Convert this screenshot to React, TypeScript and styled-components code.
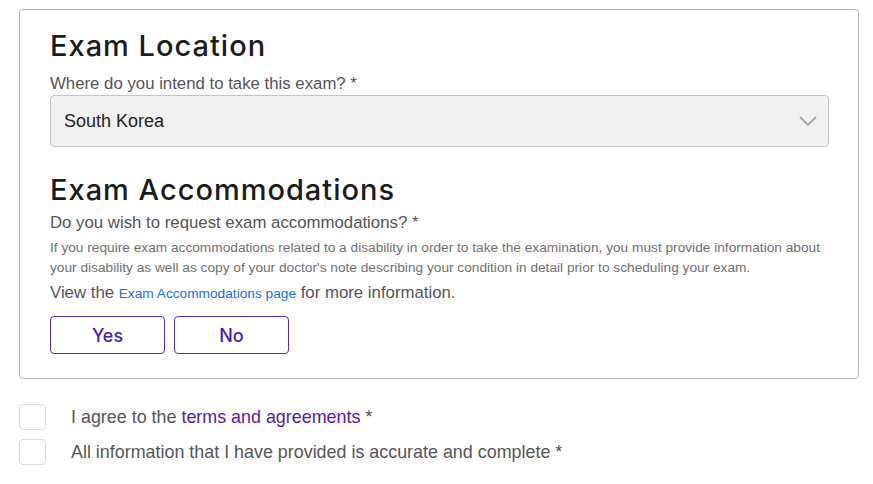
import React from "react";
import styled, { createGlobalStyle } from "styled-components";

const GlobalStyle = createGlobalStyle`
  html, body { margin: 0; padding: 0; background: #ffffff; }
  body { font-family: "Liberation Sans", Arial, sans-serif; }
`;

const Page = styled.div`
  padding: 9px 14px 0 19px;
`;

const Card = styled.section`
  border: 1px solid #b3b3b3;
  border-radius: 4px;
  padding: 19px 29px 24px 30px;
  display: flex;
  flex-direction: column;
`;

const Heading = styled.h2<{ $top?: number }>`
  margin: ${(p) => p.$top ?? 0}px 0 0 0;
  font-family: Inter, "Open Sans", sans-serif;
  font-weight: 500;
  font-size: 29px;
  line-height: 34px;
  letter-spacing: 1px;
  color: #1c1c1c;
`;

const Label = styled.div<{ $top: number }>`
  margin-top: ${(p) => p.$top}px;
  font-size: 16.8px;
  line-height: 20px;
  color: #555555;
`;

const Hint = styled.p`
  margin: 5px 0 0 0;
  font-size: 13.7px;
  line-height: 20px;
  color: #707070;
`;

const Link = styled.a`
  color: #1a6ee8;
  font-size: 13.7px;
  text-decoration: none;
`;

const SelectBox = styled.div`
  margin-top: 1px;
  height: 50px;
  border: 1px solid #c4c4c4;
  border-radius: 4px;
  background: #f1f1f1;
  display: flex;
  align-items: center;
  justify-content: space-between;
  padding: 0 11px 0 13px;
  font-size: 18px;
  color: #222222;
`;

const ButtonRow = styled.div`
  margin-top: 12px;
  display: flex;
  gap: 9px;
`;

const ChoiceButton = styled.button`
  width: 115px;
  height: 38px;
  border: 1px solid #5a2dbb;
  border-radius: 4px;
  background: #ffffff;
  color: #4b1ca8;
  font-family: Inter, "Liberation Sans", sans-serif;
  font-weight: 500;
  font-size: 18px;
  cursor: pointer;
`;

const Checks = styled.div`
  margin-top: 25px;
  display: flex;
  flex-direction: column;
  gap: 9px;
`;

const CheckRow = styled.label`
  display: flex;
  align-items: center;
  gap: 25px;
  font-size: 17.9px;
  line-height: 22px;
  color: #555555;
`;

const Box = styled.span`
  width: 25px;
  height: 24px;
  border: 1px solid #dcdcdc;
  border-radius: 4px;
  background: #ffffff;
  flex: none;
`;

const Terms = styled.a`
  color: #5b1a9c;
  text-decoration: none;
`;

const Chevron = () => (
  <svg width="18" height="10" viewBox="0 0 18 10" fill="none">
    <path d="M1 1l8 8 8-8" stroke="#a8a8a8" strokeWidth="2" />
  </svg>
);

export default function App() {
  return (
    <>
      <GlobalStyle />
      <Page>
        <Card>
          <Heading>Exam Location</Heading>
          <Label $top={11}>Where do you intend to take this exam? *</Label>
          <SelectBox>
            <span>South Korea</span>
            <Chevron />
          </SelectBox>
          <Heading $top={26}>Exam Accommodations</Heading>
          <Label $top={6}>Do you wish to request exam accommodations? *</Label>
          <Hint>
            If you require exam accommodations related to a disability in order to take the examination, you must
            provide information about your disability as well as copy of your doctor's note describing your condition
            in detail prior to scheduling your exam.
          </Hint>
          <Label $top={5}>
            View the <Link href="#">Exam Accommodations page</Link> for more information.
          </Label>
          <ButtonRow>
            <ChoiceButton>Yes</ChoiceButton>
            <ChoiceButton>No</ChoiceButton>
          </ButtonRow>
        </Card>
        <Checks>
          <CheckRow>
            <Box />
            <span>
              I agree to the <Terms href="#">terms and agreements</Terms> *
            </span>
          </CheckRow>
          <CheckRow>
            <Box />
            <span>All information that I have provided is accurate and complete *</span>
          </CheckRow>
        </Checks>
      </Page>
    </>
  );
}
